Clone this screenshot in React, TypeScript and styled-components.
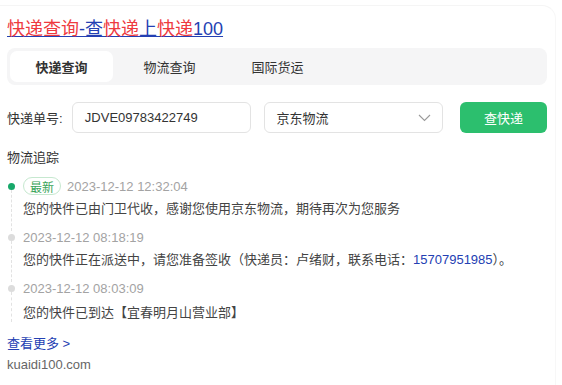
import React from 'react'
import styled, { createGlobalStyle } from 'styled-components'

const GlobalStyle = createGlobalStyle`
  body {
    margin: 0;
    background: #fff;
    font-family: "Liberation Sans", "Noto Sans CJK SC", Arial, sans-serif;
    color: #333;
  }
`

const Card = styled.div`
  margin-top: 5px;
  margin-right: 6px;
  border-top: 1px solid #f5f5f5;
  border-right: 1px solid #f7f7f7;
  border-top-right-radius: 14px;
  padding: 10px 8px 12px 7px;
  min-height: 360px;
  box-sizing: border-box;
`

const Title = styled.a`
  display: inline-block;
  font-size: 18px;
  line-height: 26px;
  color: #2440b3;
  text-decoration: underline;
  em {
    font-style: normal;
    color: #ee3a3f;
  }
`

const TabBar = styled.div`
  display: flex;
  gap: 5px;
  margin-top: 6px;
  height: 37px;
  padding: 3px;
  box-sizing: border-box;
  background: #f5f5f6;
  border-radius: 8px;
`

const Tab = styled.div<{ $active?: boolean }>`
  width: 103px;
  display: flex;
  align-items: center;
  justify-content: center;
  font-size: 13px;
  border-radius: 7px;
  color: #333;
  font-weight: ${p => (p.$active ? 700 : 400)};
  background: ${p => (p.$active ? '#fff' : 'transparent')};
`

const FormRow = styled.div`
  display: flex;
  align-items: center;
  margin-top: 17px;
  height: 31px;
`

const Label = styled.span`
  font-size: 13px;
  color: #333;
  width: 65px;
`

const Field = styled.div<{ $width: number }>`
  width: ${p => p.$width}px;
  height: 31px;
  box-sizing: border-box;
  border: 1px solid #e3e3e3;
  border-radius: 6px;
  display: flex;
  align-items: center;
  justify-content: space-between;
  padding: 0 11px 0 12px;
  font-size: 13px;
  color: #333;
  margin-right: 13px;
`

const SearchButton = styled.button`
  width: 87px;
  height: 31px;
  margin-left: 4px;
  border: none;
  border-radius: 6px;
  background: #2cbf6e;
  color: #fff;
  font-family: inherit;
  font-size: 13px;
`

const SectionTitle = styled.div`
  margin-top: 15px;
  font-size: 13px;
  line-height: 20px;
  color: #333;
`

const Timeline = styled.div`
  margin-top: 8px;
`

const Item = styled.div<{ $last?: boolean }>`
  position: relative;
  padding: 0 0 ${p => (p.$last ? '9px' : '8px')} 16px;
  &::before {
    content: '';
    position: absolute;
    left: 4px;
    top: 14px;
    bottom: ${p => (p.$last ? '10px' : '-4px')};
    border-left: 1px dashed #e2e2e2;
  }
`

const Dot = styled.span<{ $active?: boolean }>`
  position: absolute;
  left: 1px;
  top: 7px;
  width: 7px;
  height: 7px;
  border-radius: 50%;
  background: ${p => (p.$active ? '#17a86a' : '#dcdcdc')};
`

const DateRow = styled.div`
  display: flex;
  align-items: center;
  gap: 6px;
  height: 20px;
  font-size: 13px;
  color: #a3a3a3;
`

const NewTag = styled.span`
  display: inline-flex;
  align-items: center;
  height: 16px;
  padding: 0 6px;
  border: 1px solid #c6e8cf;
  border-radius: 9px;
  font-size: 12px;
  color: #3aa55a;
`

const Desc = styled.div<{ $gap: number }>`
  margin-top: ${p => p.$gap}px;
  font-size: 13px;
  line-height: 20px;
  color: #444;
`

const Phone = styled.span`
  color: #2440b3;
`

const MoreLink = styled.a`
  display: block;
  margin-top: 2px;
  font-size: 13px;
  line-height: 20px;
  color: #2440b3;
  text-decoration: none;
`

const Source = styled.div`
  margin-top: 1px;
  font-size: 13px;
  line-height: 20px;
  color: #666;
`

const Chevron = () => (
  <svg width="13" height="8" viewBox="0 0 13 8" fill="none">
    <path d="M1 1l5.5 5.5L12 1" stroke="#9a9a9a" strokeWidth="1.1" />
  </svg>
)

const tracks = [
  {
    time: '2023-12-12 12:32:04',
    text: <>您的快件已由门卫代收，感谢您使用京东物流，期待再次为您服务</>,
    latest: true,
    gap: 3,
  },
  {
    time: '2023-12-12 08:18:19',
    text: <>您的快件正在派送中，请您准备签收（快递员：卢绪财，联系电话：<Phone>15707951985</Phone>）。</>,
    gap: 3,
  },
  {
    time: '2023-12-12 08:03:09',
    text: <>您的快件已到达【宜春明月山营业部】</>,
    gap: 5,
  },
]

export default function App() {
  return (
    <>
      <GlobalStyle />
      <Card>
        <Title>
          <em>快递查询</em>-查<em>快递</em>上<em>快递</em>100
        </Title>
        <TabBar>
          <Tab $active>快递查询</Tab>
          <Tab>物流查询</Tab>
          <Tab>国际货运</Tab>
        </TabBar>
        <FormRow>
          <Label>快递单号:</Label>
          <Field $width={179}>JDVE09783422749</Field>
          <Field $width={180}>
            京东物流
            <Chevron />
          </Field>
          <SearchButton>查快递</SearchButton>
        </FormRow>
        <SectionTitle>物流追踪</SectionTitle>
        <Timeline>
          {tracks.map((t, i) => (
            <Item key={t.time} $last={i == tracks.length - 1}>
              <Dot $active={t.latest} />
              <DateRow>
                {t.latest && <NewTag>最新</NewTag>}
                {t.time}
              </DateRow>
              <Desc $gap={t.gap}>{t.text}</Desc>
            </Item>
          ))}
        </Timeline>
        <MoreLink>查看更多 &gt;</MoreLink>
        <Source>kuaidi100.com</Source>
      </Card>
    </>
  )
}
